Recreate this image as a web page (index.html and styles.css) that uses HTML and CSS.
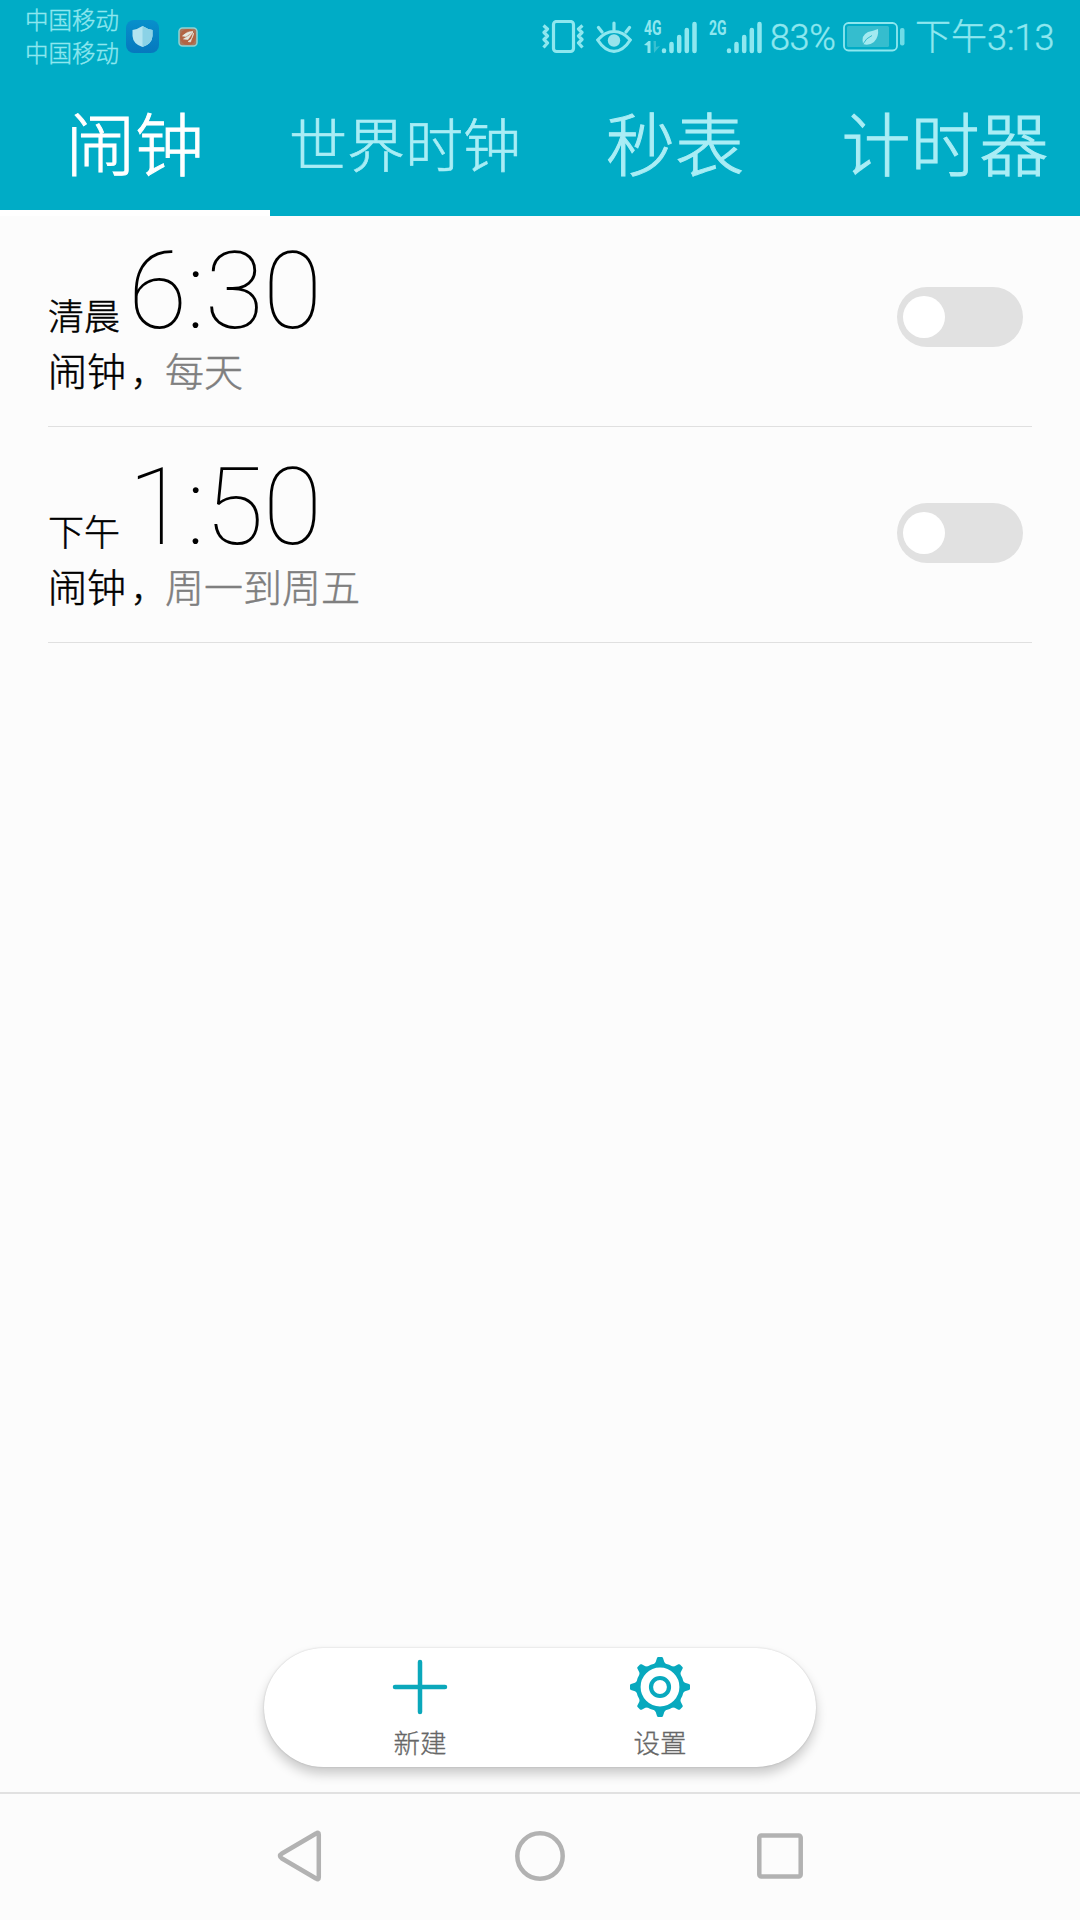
FILE: index.html
```html
<!DOCTYPE html>
<html lang="zh-CN">
<head>
<meta charset="utf-8">
<title>闹钟</title>
<link rel="stylesheet" href="styles.css">
</head>
<body>
<div class="screen">
  <header class="header">
    <div class="status">
      <div class="carriers"><span>中国移动</span><span>中国移动</span></div>
      <svg class="shield" width="33" height="33" viewBox="0 0 33 33">
        <defs><linearGradient id="blue" x1="0" y1="0" x2="0" y2="1"><stop offset="0" stop-color="#0790cb"/><stop offset="1" stop-color="#0678be"/></linearGradient></defs>
        <rect width="33" height="33" rx="8" fill="url(#blue)"/>
        <path d="M16.5 6Q21 9 26.500 10V16Q26 24 16.5 27Q7 24 6.500 16V10Q12 9 16.5 6Z" fill="#b3e4f0"/>
        <path d="M16.5 6Q21 9 26.500 10V16Q26 24 16.5 27Z" fill="#8bd2e6"/>
      </svg>
      <svg class="app" width="20" height="20" viewBox="0 0 20 20">
        <rect x="1" y="1" width="18" height="18" rx="3.5" fill="#a9785d" stroke="#8fd3d5" stroke-width="1.5"/>
        <circle cx="10" cy="10" r="8" fill="#b26443"/>
        <path d="M4.5 9Q9 4 15 4.500L8 9.500ZM5.500 12Q10 10 15 5L10 12.500ZM10 14.500Q15 12 15.500 6L12.500 15Z" fill="#e5e9e1" stroke="#e5e9e1" stroke-width=".6"/>
      </svg>
      <svg class="vibrate" width="42" height="34" viewBox="0 0 42 34" fill="none" stroke="#8ee7ef">
        <rect x="11.500" y="1.500" width="20" height="30" rx="3" stroke-width="3.200"/>
        <path d="M1.500 5.500L5.500 9L2 12.500L5.500 16L2 19.500L5.500 23L1.500 27.500M40.500 5.500L36.500 9L40 12.500L36.500 16L40 19.500L36.500 23L40.500 27.500" stroke-width="3.200" stroke-linejoin="round"/>
      </svg>
      <svg class="eye" width="36" height="32" viewBox="0 0 36 32" fill="none" stroke="#8ee7ef" stroke-width="3.200" stroke-linecap="round">
        <path d="M1.700 19Q9 10.500 18 10.500T34.300 19Q27 30.300 18 30.300T1.700 19ZM18 9V2M6 11L2.500 6.500M30 11L33.500 6.500"/>
        <circle cx="18" cy="19.500" r="6.200" fill="#98e3eb" stroke="none"/>
      </svg>
      <div class="signal">
        <span class="net">4G</span>
        <svg width="54" height="34" viewBox="0 0 54 34">
          <path d="M0 25L4.500 21H6.500V33H3.500V25.500Z" fill="#8ee7ef"/>
          <path d="M9.500 21H12V27L16 26L10 33Z" fill="#36c0d1"/>
          <path d="M20.500 30.500V31M28 24V31M35.700 17V31M43.300 10V31M51 4V31" transform="translate(-.5 0)" stroke="#8ee7ef" stroke-width="4.500" stroke-linecap="round"/>
        </svg>
      </div>
      <div class="signal">
        <span class="net">2G</span>
        <svg width="54" height="34" viewBox="0 0 54 34">
          <path d="M20.500 30.500V31M28 24V31M35.700 17V31M43.300 10V31M51 4V31" transform="translate(-.5 0)" stroke="#8ee7ef" stroke-width="4.500" stroke-linecap="round"/>
        </svg>
      </div>
      <span class="percent">83%</span>
      <svg class="battery" width="62" height="30" viewBox="0 0 62 30">
        <rect x="1" y="1" width="53" height="27.500" rx="4.500" fill="none" stroke="#8ee7ef" stroke-width="1.800"/>
        <rect x="4" y="4" width="42" height="21" rx="1.500" fill="#35bdce"/>
        <rect x="57" y="6" width="4.500" height="17.500" rx="2" fill="#6edce7"/>
        <path d="M35 7Q36 15 31 20Q26 24 20 22Q18 13 25 10Q30 9 35 7Z" fill="#a3eaf0"/>
        <path d="M20 22Q23 16 29 13.500" fill="none" stroke="#35bdce" stroke-width="1"/>
      </svg>
      <span class="clock">下午3:13</span>
    </div>
    <nav class="tabs">
      <a class="tab active">闹钟</a>
      <a class="tab compact">世界时钟</a>
      <a class="tab">秒表</a>
      <a class="tab">计时器</a>
    </nav>
  </header>
  <main class="alarms">
    <section class="alarm">
      <div class="info">
        <div class="when"><span class="period">清晨</span><span class="time">6:30</span></div>
        <div class="detail">闹钟<span class="comma">，</span><span class="repeat">每天</span></div>
      </div>
      <div class="switch"><span class="knob"></span></div>
    </section>
    <section class="alarm">
      <div class="info">
        <div class="when"><span class="period">下午</span><span class="time">1:50</span></div>
        <div class="detail">闹钟<span class="comma">，</span><span class="repeat">周一到周五</span></div>
      </div>
      <div class="switch"><span class="knob"></span></div>
    </section>
  </main>
  <div class="toolbar">
    <div class="action">
      <svg width="62" height="62" viewBox="-31 -31 62 62"><path d="M-25 0H25M0-25V25" stroke="#0ba8bb" stroke-width="4.500" stroke-linecap="round"/></svg>
      <span>新建</span>
    </div>
    <div class="action">
      <svg width="62" height="62" viewBox="-31 -31 62 62">
        <defs><path id="tooth" d="M-6.500-22L-4.300-25L-3-29Q-2.700-30 -1.700-30H1.700Q2.700-30 3-29L4.300-25L6.500-22Z"/></defs>
        <g fill="#08a9be">
          <use href="#tooth"/><use href="#tooth" transform="rotate(45)"/><use href="#tooth" transform="rotate(90)"/><use href="#tooth" transform="rotate(135)"/>
          <use href="#tooth" transform="rotate(180)"/><use href="#tooth" transform="rotate(225)"/><use href="#tooth" transform="rotate(270)"/><use href="#tooth" transform="rotate(315)"/>
        </g>
        <g fill="none" stroke="#08a9be"><circle r="21.700" stroke-width="4.600"/><circle r="9" stroke-width="4.200"/></g>
      </svg>
      <span>设置</span>
    </div>
  </div>
  <footer class="navbar">
    <svg width="60" height="60" viewBox="0 0 60 60"><path d="M48.800 8.500V51.500Q48.800 54.500 46 52.500L12 32.500Q8 30 12 27.500L46 7.500Q48.800 5.500 48.800 8.500Z"/></svg>
    <svg width="60" height="60" viewBox="0 0 60 60"><circle cx="30" cy="30" r="22.700"/></svg>
    <svg width="60" height="60" viewBox="0 0 60 60"><rect x="9.300" y="9.500" width="41.400" height="41" rx="2"/></svg>
  </footer>
</div>
</body>
</html>
```
FILE: styles.css
```css
* { box-sizing: border-box; }
body { margin: 0; background: #fcfcfc; }
svg { display: block; flex: none; }

.screen {
  width: 1080px;
  height: 1920px;
  display: flex;
  flex-direction: column;
  background: #fcfcfc;
  font-family: Roboto, "Noto Sans CJK SC", sans-serif;
  font-weight: 300;
  color: #000;
  white-space: nowrap;
  overflow: hidden;
}

.header {
  height: 216px;
  display: flex;
  flex-direction: column;
  background: #00acc6;
}

.status {
  height: 73px;
  display: flex;
  align-items: center;
  padding-left: 25px;
  color: #8ee7ef;
  -webkit-text-stroke: .4px;
}
.carriers {
  display: flex;
  flex-direction: column;
  width: 96px;
  margin: 0 5px 0 0;
  padding-top: 3px;
  font-size: 23.5px;
  line-height: 33px;
}
.app { margin-left: 19px; }
.vibrate { margin-left: 344px; }
.eye { margin: 0 12px; }
.signal { position: relative; margin-right: 11px; }
.signal + .signal { margin-right: 7px; }
.net {
  position: absolute;
  left: 0;
  top: -2px;
  font: 700 20px/20px Roboto, sans-serif;
  -webkit-text-stroke: 0;
  transform: scaleX(.7);
  transform-origin: left;
}
.percent { width: 67px; padding-top: 2px; font-size: 36px; line-height: 42px; letter-spacing: -.4px; }
.battery { margin: 0 10px 0 6px; }
.clock { padding-top: 3px; font-size: 36px; line-height: 42px; }

.tabs { display: flex; height: 143px; }
.tab {
  width: 270px;
  height: 143px;
  line-height: 137px;
  padding-top: 6px;
  text-align: center;
  font-size: 69px;
  color: #a9edf5;
  -webkit-text-stroke: 1px;
}
.tab.compact { font-size: 58px; -webkit-text-stroke: .6px; }
.tab.active { color: #fff; line-height: 131px; padding-top: 9px; border-bottom: 6px solid #fff; }

.alarms { flex: 1; margin-top: -5px; padding: 0 48px; }
.alarm {
  height: 216px;
  display: flex;
  justify-content: space-between;
  padding-right: 9px;
  border-bottom: 1px solid #e0e0e0;
}
.when {
  display: flex;
  align-items: baseline;
  gap: 8px;
  height: 139px;
  line-height: 160px;
}
.period { font-size: 36px; width: 72px; transform: translateY(2px); -webkit-text-stroke: .5px; }
.time { font-size: 108px; font-weight: 100; letter-spacing: -.8px; }
.detail { font-size: 39px; line-height: 47px; -webkit-text-stroke: .5px; }
.comma { display: inline-block; width: 34px; margin-left: 5px; font-size: 34px; }
.repeat { color: #7f7f7f; }
.switch {
  width: 126px;
  height: 60px;
  margin-top: 76px;
  padding: 9px 6px;
  border-radius: 30px;
  background: #e1e1e1;
}
.knob { display: block; width: 42px; height: 42px; border-radius: 50%; background: #fff; }

.toolbar {
  width: 552px;
  height: 119px;
  margin: 0 auto 25px;
  padding: 8px 36px 0;
  display: flex;
  border-radius: 60px;
  background: #fff;
  box-shadow: 0 0 2px rgba(0, 0, 0, .18), 0 7px 12px rgba(0, 0, 0, .2);
}
.action {
  flex: 1;
  display: flex;
  flex-direction: column;
  align-items: center;
  font-size: 26.5px;
  line-height: 52px;
  color: #666;
  -webkit-text-stroke: .3px;
}

.navbar {
  height: 128px;
  padding-bottom: 2px;
  border-top: 2px solid #e1e1e1;
  display: flex;
  justify-content: center;
  align-items: center;
  gap: 180px;
}
.navbar svg { fill: none; stroke: #b2b2b2; stroke-width: 4.5; }
```
